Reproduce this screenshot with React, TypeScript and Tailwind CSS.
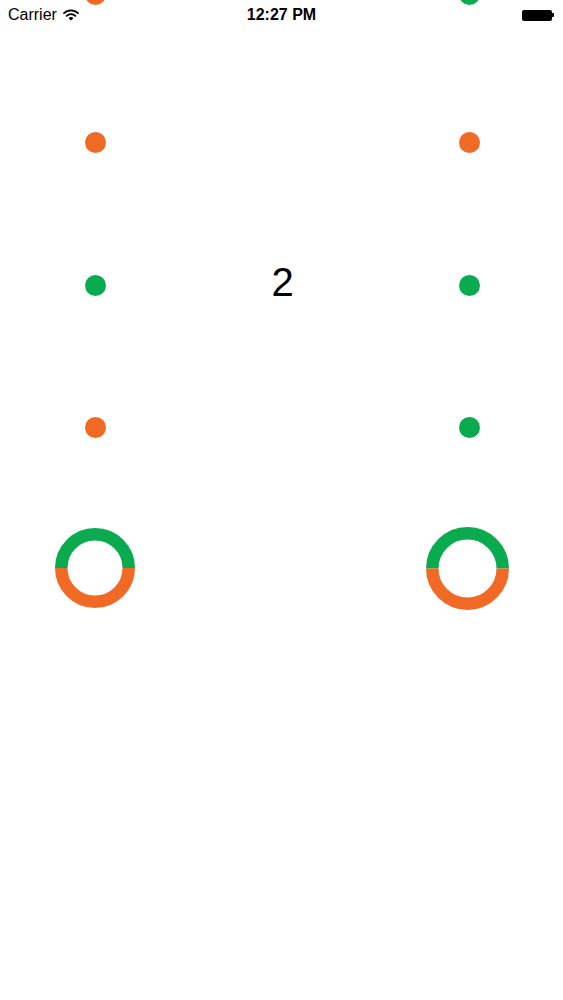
import React from 'react';

const ORANGE = '#F06A25';
const GREEN = '#0AAA4F';

function Dot({ color }: { color: 'orange' | 'green' }) {
  return <div className={color === 'orange' ? 'w-[21px] h-[21px] rounded-full bg-[#F06A25]' : 'w-[21px] h-[21px] rounded-full bg-[#0AAA4F]'} />;
}

function Ring({ size }: { size: number }) {
  const s = 12.5;
  const r = (size - s) / 2;
  const c = size / 2;
  return (
    <svg width={size} height={size} viewBox={`0 0 ${size} ${size}`}>
      <path d={`M ${c - r} ${c} A ${r} ${r} 0 0 1 ${c + r} ${c}`} fill="none" stroke={GREEN} strokeWidth={s} />
      <path d={`M ${c + r} ${c} A ${r} ${r} 0 0 1 ${c - r} ${c}`} fill="none" stroke={ORANGE} strokeWidth={s} />
    </svg>
  );
}

function StatusBar() {
  return (
    <div className="absolute top-0 left-0 right-0 h-[30px] flex items-center justify-between px-2 text-[16px] text-black font-['Liberation_Sans',Arial,sans-serif]">
      <div className="flex items-center gap-[6px] w-[120px]">
        <span>Carrier</span>
        <svg width="16" height="12" viewBox="0 0 16 12">
          <path d="M1 4.2 A10 10 0 0 1 15 4.2" fill="none" stroke="#000" strokeWidth="1.8" strokeLinecap="round" />
          <path d="M3.6 6.8 A6.4 6.4 0 0 1 12.4 6.8" fill="none" stroke="#000" strokeWidth="1.8" strokeLinecap="round" />
          <path d="M8 11.5 L5.6 9.2 A3.4 3.4 0 0 1 10.4 9.2 Z" fill="#000" />
        </svg>
      </div>
      <span className="font-semibold">12:27 PM</span>
      <div className="w-[120px] flex justify-end pr-[1px]">
        <div className="flex items-center">
          <div className="w-[30px] h-[11px] bg-black rounded-[2px]" />
          <div className="w-[2px] h-[4px] bg-black rounded-r-[1px]" />
        </div>
      </div>
    </div>
  );
}

export default function App() {
  return (
    <div className="relative w-[563px] h-[1000px] bg-white overflow-hidden">
      <div className="-mt-[71px] grid grid-cols-[190px_1fr_188px] grid-rows-[142px_142px_142px_142px_142px] font-['Liberation_Sans',Arial,sans-serif]">
        <div className="flex items-end justify-center pb-[66px]"><Dot color="orange" /></div>
        <div />
        <div className="flex items-end justify-center pb-[66px]"><Dot color="green" /></div>

        <div className="flex items-center justify-center"><Dot color="orange" /></div>
        <div />
        <div className="flex items-center justify-center"><Dot color="orange" /></div>

        <div className="flex items-center justify-center pt-[2px]"><Dot color="green" /></div>
        <div className="flex items-center justify-center pb-[5px] text-[40px] leading-none text-black">2</div>
        <div className="flex items-center justify-center pt-[2px]"><Dot color="green" /></div>

        <div className="flex items-center justify-center pt-[2px]"><Dot color="orange" /></div>
        <div />
        <div className="flex items-center justify-center pt-[2px]"><Dot color="green" /></div>

        <div className="flex items-center justify-center"><Ring size={80} /></div>
        <div />
        <div className="flex items-center justify-center pr-[3px]"><Ring size={83} /></div>
      </div>
      <StatusBar />
    </div>
  );
}
